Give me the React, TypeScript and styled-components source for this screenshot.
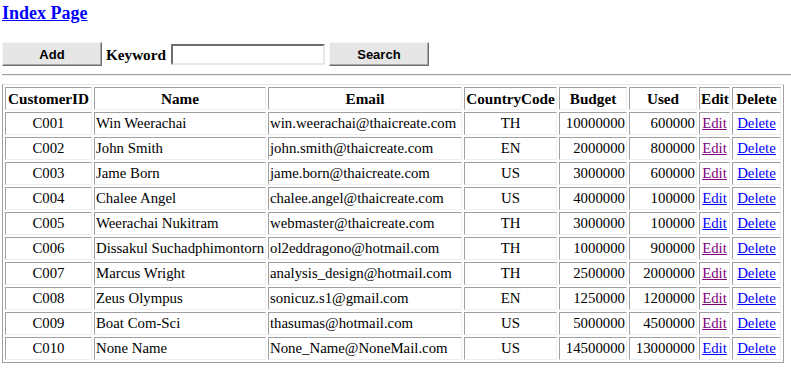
import { createGlobalStyle, styled } from 'styled-components'

const GlobalStyle = createGlobalStyle`
  body {
    margin: 0 0 0 2px;
    background: #fff;
    font-family: "Liberation Serif", "Times New Roman", serif;
    font-size: 16px;
    color: #000;
  }
`

const Title = styled.h3`
  margin: 0;
  padding-top: 3px;
  font-size: 18px;
  line-height: 21px;
  font-weight: 700;

  a { color: #0000ff; text-decoration: underline; }
`

const SearchForm = styled.form`
  display: flex;
  align-items: center;
  margin-top: 18px;
  height: 24px;
`

const Button = styled.button`
  width: 100px;
  height: 24px;
  padding: 0;
  background: #e6e6e6;
  border: 1px solid;
  border-color: #f4f4f4 #6e6e6e #6e6e6e #f4f4f4;
  box-shadow: inset -1px -1px 0 #a8a8a8;
  font-family: "Liberation Sans", Arial, sans-serif;
  font-size: 13px;
  font-weight: 700;
  color: #000;
`

const Label = styled.label`
  font-size: 15.2px;
  font-weight: 700;
  line-height: 19px;
  margin: 0 5px 0 4px;
`

const KeywordInput = styled.input`
  box-sizing: border-box;
  width: 154px;
  height: 21px;
  margin-right: 4px;
  border: 2px solid;
  border-color: #6e6e6e #e8e8e8 #e8e8e8 #6e6e6e;
  background: #fff;
  padding: 0 2px;
`

const Rule = styled.hr`
  margin: 8px 0 0;
  height: 0;
  border: 0;
  border-top: 1px solid #a0a0a0;
  border-bottom: 1px solid #eeeeee;
`

const Table = styled.table`
  margin-top: 8px;
  width: 782px;
  table-layout: fixed;
  border-collapse: separate;
  border-spacing: 2px;
  border: 1px solid;
  border-color: #e6e6e6 #a0a0a0 #a0a0a0 #a0a0a0;
  line-height: 19px;
`

type Align = 'left' | 'center' | 'right'

const Th = styled.th<{ $w: number }>`
  box-sizing: border-box;
  width: ${p => p.$w}px;
  padding: 1px;
  border: 1px solid;
  border-color: #a0a0a0 #eeeeee #eeeeee #a0a0a0;
  font-size: 15.2px;
  font-weight: 700;
  text-align: center;
  white-space: nowrap;
  overflow: hidden;
`

const Td = styled.td<{ $align: Align }>`
  padding: 1px;
  border: 1px solid;
  border-color: #a0a0a0 #eeeeee #eeeeee #a0a0a0;
  font-size: 14.8px;
  text-align: ${p => p.$align};
  white-space: nowrap;
  overflow: hidden;
`

const RowLink = styled.a<{ $visited?: boolean }>`
  color: ${p => (p.$visited ? '#800080' : '#0000ff')};
  text-decoration: underline;
`

const columns = [
  { label: 'CustomerID', w: 87 },
  { label: 'Name', w: 172 },
  { label: 'Email', w: 194 },
  { label: 'CountryCode', w: 93 },
  { label: 'Budget', w: 68 },
  { label: 'Used', w: 68 },
  { label: 'Edit', w: 31 },
  { label: 'Delete', w: 49 },
]

const customers = [
  { id: 'C001', name: 'Win Weerachai', email: 'win.weerachai@thaicreate.com', cc: 'TH', budget: 10000000, used: 600000, seen: true },
  { id: 'C002', name: 'John Smith', email: 'john.smith@thaicreate.com', cc: 'EN', budget: 2000000, used: 800000, seen: true },
  { id: 'C003', name: 'Jame Born', email: 'jame.born@thaicreate.com', cc: 'US', budget: 3000000, used: 600000, seen: true },
  { id: 'C004', name: 'Chalee Angel', email: 'chalee.angel@thaicreate.com', cc: 'US', budget: 4000000, used: 100000, seen: false },
  { id: 'C005', name: 'Weerachai Nukitram', email: 'webmaster@thaicreate.com', cc: 'TH', budget: 3000000, used: 100000, seen: false },
  { id: 'C006', name: 'Dissakul Suchadphimontorn', email: 'ol2eddragono@hotmail.com', cc: 'TH', budget: 1000000, used: 900000, seen: true },
  { id: 'C007', name: 'Marcus Wright', email: 'analysis_design@hotmail.com', cc: 'TH', budget: 2500000, used: 2000000, seen: true },
  { id: 'C008', name: 'Zeus Olympus', email: 'sonicuz.s1@gmail.com', cc: 'EN', budget: 1250000, used: 1200000, seen: true },
  { id: 'C009', name: 'Boat Com-Sci', email: 'thasumas@hotmail.com', cc: 'US', budget: 5000000, used: 4500000, seen: true },
  { id: 'C010', name: 'None Name', email: 'None_Name@NoneMail.com', cc: 'US', budget: 14500000, used: 13000000, seen: false },
]

export default function App() {
  return (
    <>
      <GlobalStyle />
      <Title>
        <a href="#">Index Page</a>
      </Title>
      <SearchForm onSubmit={e => e.preventDefault()}>
        <Button type="button">Add</Button>
        <Label htmlFor="kw">Keyword</Label>
        <KeywordInput id="kw" type="text" />
        <Button type="submit">Search</Button>
      </SearchForm>
      <Rule />
      <Table>
        <thead>
          <tr>
            {columns.map(c => (
              <Th key={c.label} $w={c.w}>{c.label}</Th>
            ))}
          </tr>
        </thead>
        <tbody>
          {customers.map(c => (
            <tr key={c.id}>
              <Td $align="center">{c.id}</Td>
              <Td $align="left">{c.name}</Td>
              <Td $align="left">{c.email}</Td>
              <Td $align="center">{c.cc}</Td>
              <Td $align="right">{c.budget}</Td>
              <Td $align="right">{c.used}</Td>
              <Td $align="center"><RowLink href="#" $visited={c.seen}>Edit</RowLink></Td>
              <Td $align="center"><RowLink href="#">Delete</RowLink></Td>
            </tr>
          ))}
        </tbody>
      </Table>
    </>
  )
}
